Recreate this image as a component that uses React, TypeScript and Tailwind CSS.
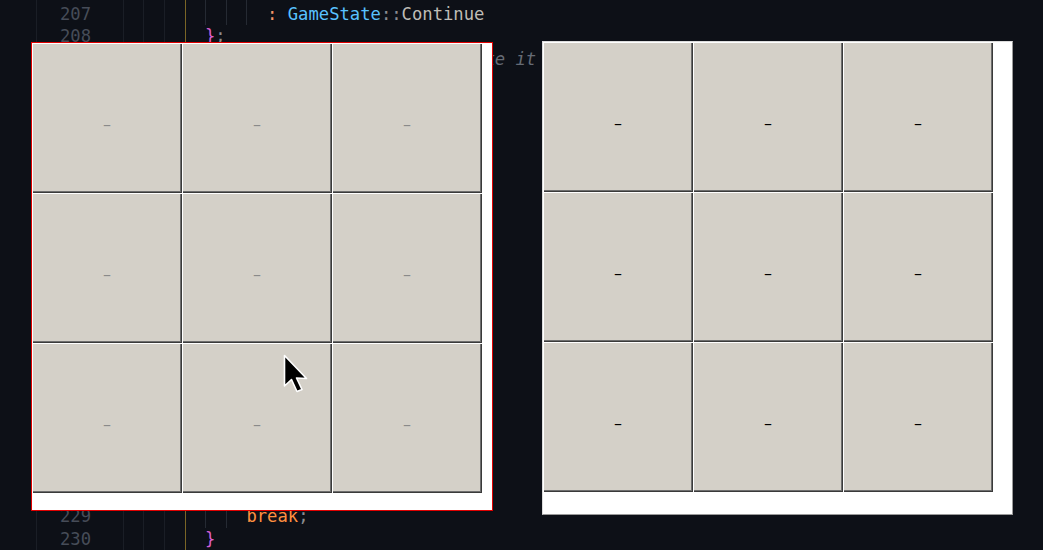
import React from 'react';

type Seg = { t: string; c: string; i?: boolean };
type Line = { n: number | null; indent: number; segs: Seg[] };

const ORANGE = 'text-[#ff8f40]';
const BLUE = 'text-[#59c2ff]';
const FG = 'text-[#bfbdb6]';
const DIM = 'text-[#8a8c90]';
const PINK = 'text-[#d95fd0]';
const COMMENT = 'text-[#656b75]';

const LINES: Line[] = [
  // 206 sits above the top edge, only its guides show
  { n: null, indent: 3, segs: [] },
  {
    n: 207,
    indent: 3,
    segs: [
      { t: ': ', c: 'text-[#f29668]' },
      { t: 'GameState', c: BLUE },
      { t: '::', c: DIM },
      { t: 'Continue', c: FG },
    ],
  },
  { n: 208, indent: 0, segs: [{ t: '}', c: PINK }, { t: ';', c: DIM }] },
  { n: 209, indent: 0, segs: [{ t: '     // the move was OK, make it so', c: COMMENT, i: true }] },
];
for (let n = 210; n <= 228; n++) LINES.push({ n, indent: 2, segs: [] });
LINES.push({ n: 229, indent: 2, segs: [{ t: 'break', c: ORANGE }, { t: ';', c: DIM }] });
LINES.push({ n: 230, indent: 0, segs: [{ t: '}', c: PINK }] });

function CodeRow({ line }: { line: Line }) {
  return (
    <div className="flex h-[22.83px] items-center leading-[22.83px]">
      <div className="w-[36px] h-full" />
      <div className="w-[87px] h-full border-l border-[#1a1e26] pl-[23px] text-[#464c58]">{line.n ?? ''}</div>
      <div className="w-[20px] h-full border-l border-[#1a1e26]" />
      <div className="w-[21px] h-full border-l border-[#1a1e26]" />
      <div className="w-[21px] h-full border-l border-[#1a1e26]" />
      <div className="h-full border-l border-[#7a6526] pl-[19px] flex">
        {Array.from({ length: line.indent }).map((_, k) => (
          <span key={k} className="inline-block w-[2ch] h-full border-l border-[#252a33]" />
        ))}
        <span className="whitespace-pre">
          {line.segs.map((s, k) => (
            <span key={k} className={`${s.c} ${s.i ? 'italic' : ''}`}>
              {s.t}
            </span>
          ))}
        </span>
      </div>
    </div>
  );
}

function Cell({ disabled }: { disabled?: boolean }) {
  return (
    <button
      className={`w-[150px] h-[150px] bg-[#d4d0c8] flex items-center justify-center shadow-[inset_1px_1px_#ffffff,inset_-1px_-1px_#3a3a3a,inset_-2px_-2px_#6e6e6e] text-[16px] leading-none font-['DejaVu_Sans',sans-serif] ${
        disabled ? 'text-[#8a8a8a]' : 'text-black'
      }`}
    >
      <span className="mt-[14px]">–</span>
    </button>
  );
}

function Board({ disabled }: { disabled?: boolean }) {
  return (
    <div className="grid grid-cols-[repeat(3,150px)] grid-rows-[repeat(3,150px)]">
      {Array.from({ length: 9 }).map((_, k) => (
        <Cell key={k} disabled={disabled} />
      ))}
    </div>
  );
}

export default function App() {
  return (
    <div className="relative w-[1043px] h-[550px] overflow-hidden bg-[#0d1017] font-['DejaVu_Sans_Mono',monospace] text-[17.2px]">
      <div className="-mt-[20.2px]">
        {LINES.map((l, k) => (
          <CodeRow key={k} line={l} />
        ))}
      </div>

      {/* left window, focused */}
      <div className="absolute left-[31px] top-[42px] w-[462px] h-[469px] border border-[#e00000] bg-white">
        <Board disabled />
      </div>

      {/* right window */}
      <div className="absolute left-[542px] top-[41px] w-[471px] h-[474px] border border-t-[#dcdcdc] border-l-[#dcdcdc] border-r-[#9a9a9a] border-b-[#9a9a9a] bg-white">
        <Board />
      </div>

      {/* mouse pointer */}
      <svg className="absolute left-[283px] top-[354px]" width="26" height="40" viewBox="0 0 26 40">
        <path
          d="M1.5 1.5 L1.5 32 L8.5 25.5 L14 37.5 L19 35.5 L13.5 24 L23.5 24.5 Z"
          fill="#000"
          stroke="#fff"
          strokeWidth="1.6"
          strokeLinejoin="round"
        />
      </svg>
    </div>
  );
}
